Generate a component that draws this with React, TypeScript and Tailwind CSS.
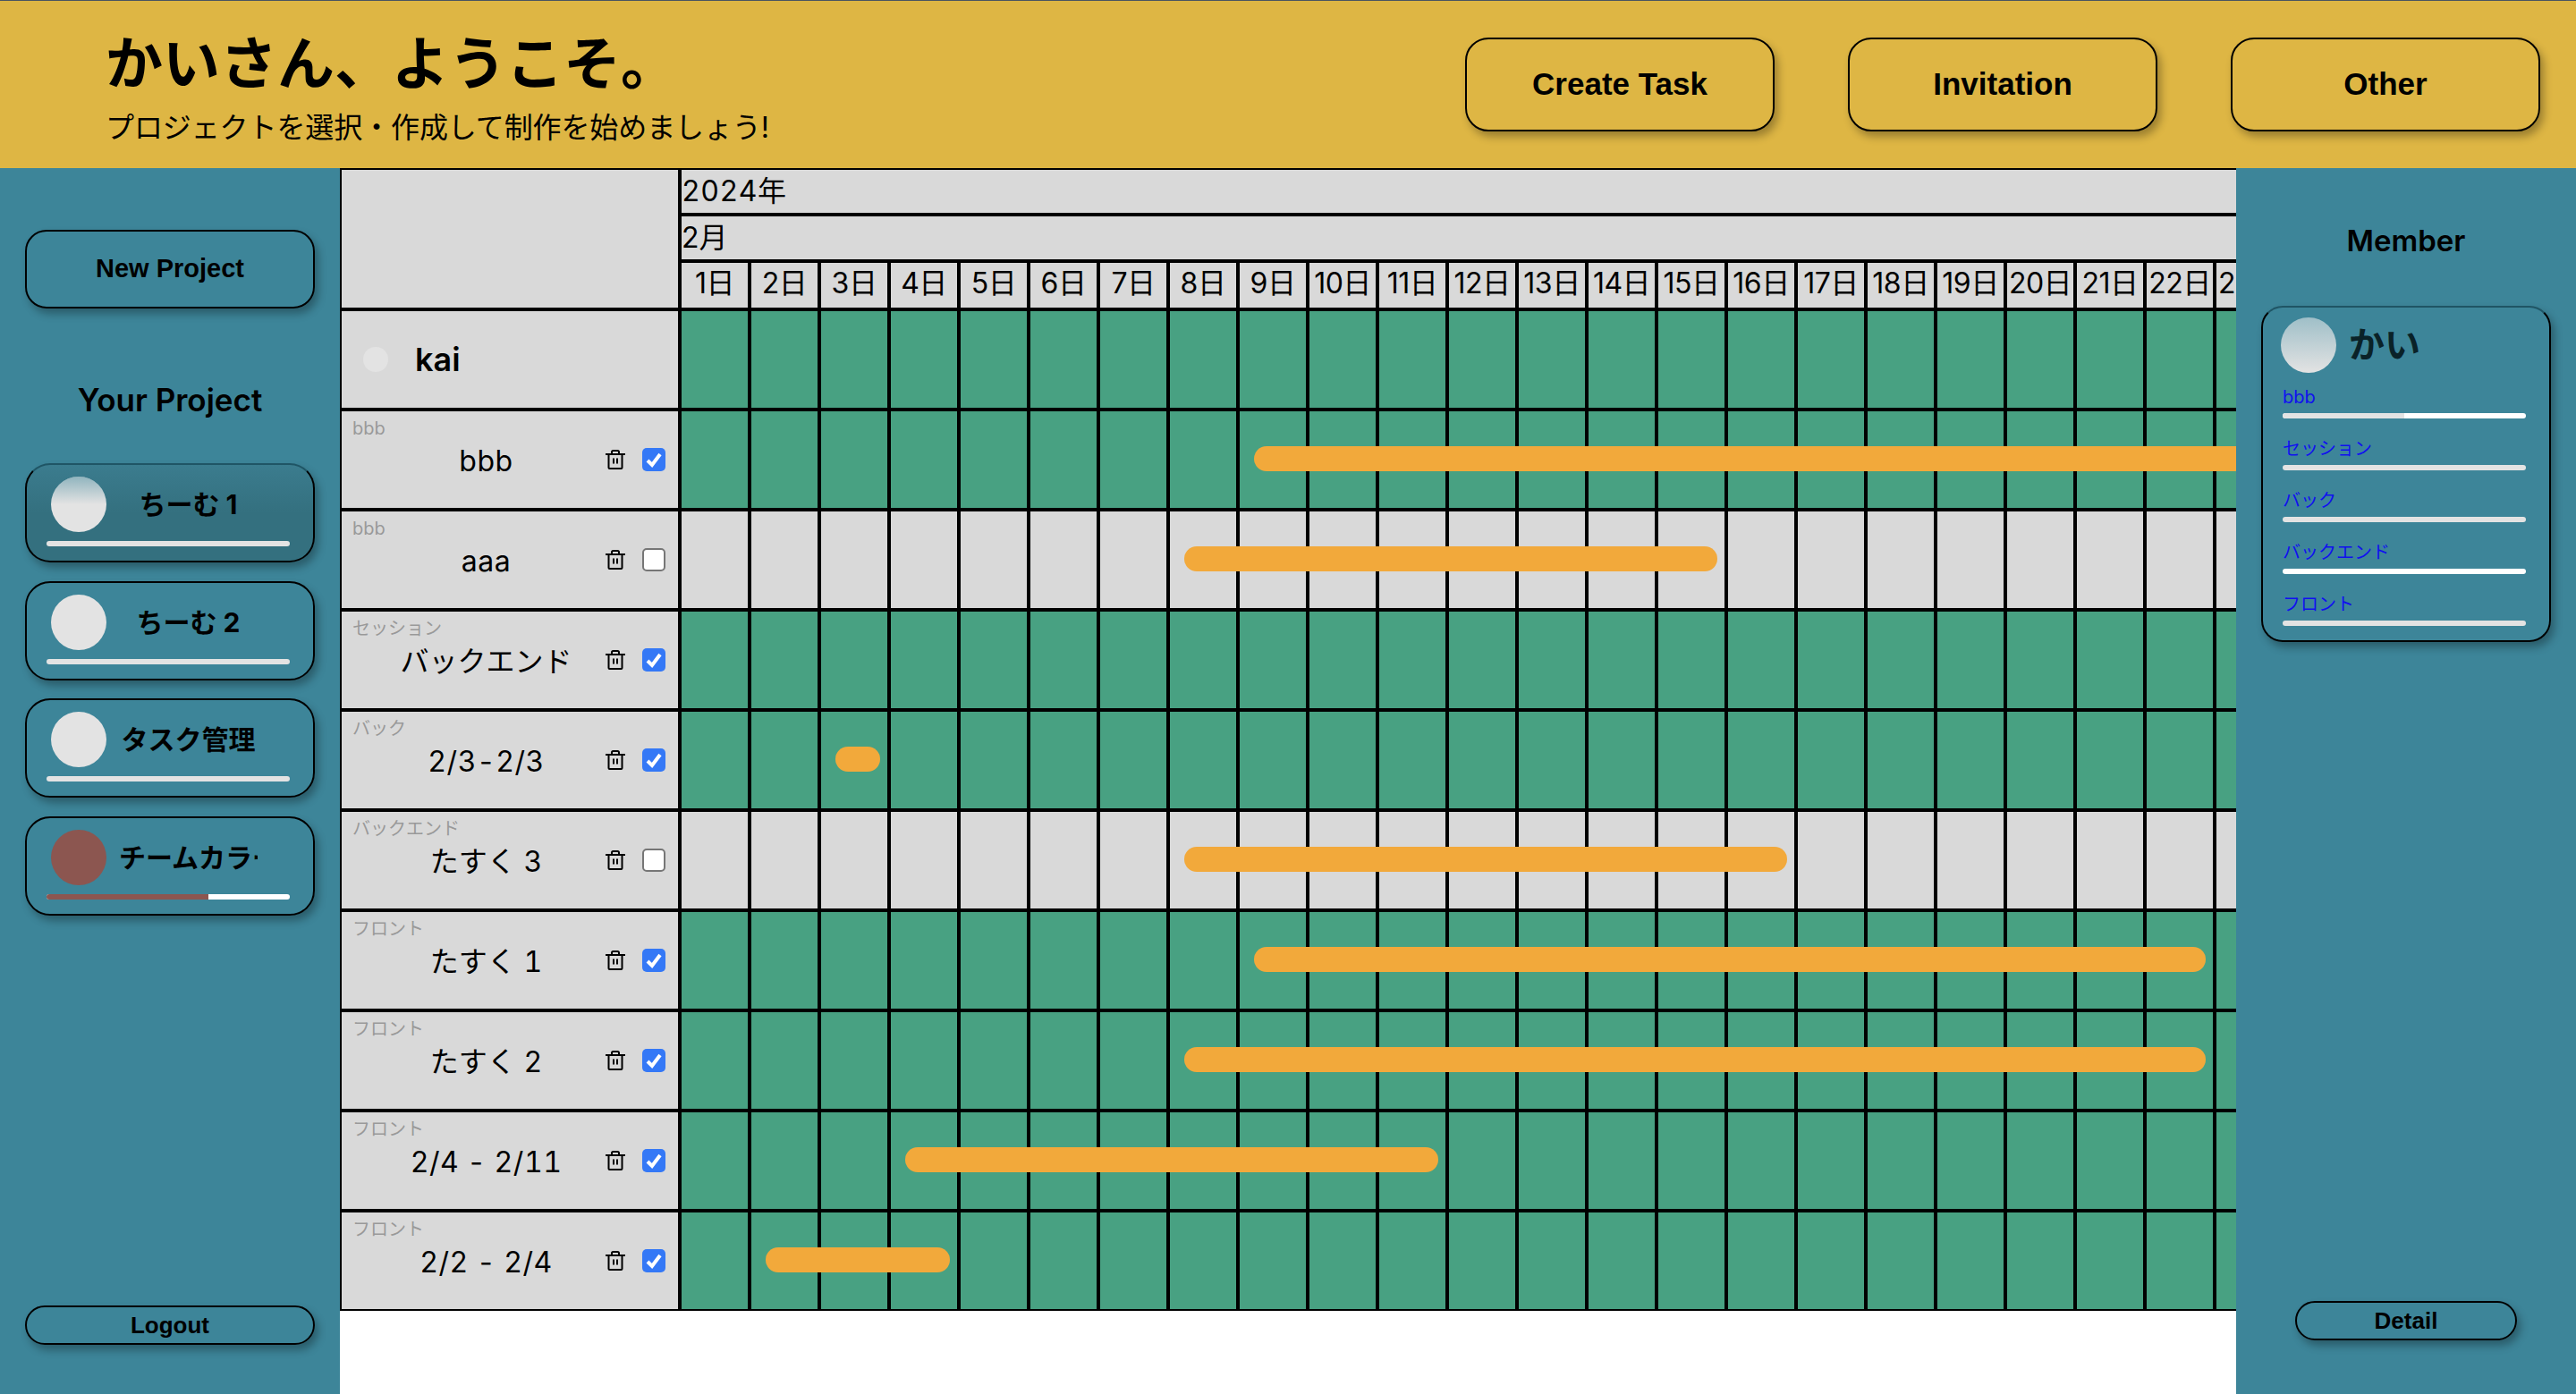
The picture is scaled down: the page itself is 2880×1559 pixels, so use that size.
import { Fragment } from 'react';

const JP = "font-['Inter','Noto_Sans_CJK_JP',sans-serif]";

interface Task {
  tag: string;
  name: string;
  done: boolean;
  // bar position in days, from the 1st
  from: number;
  to: number;
}

const days = Array.from({ length: 23 }, (_, i) => i + 1);

const tasks: Task[] = [
  { tag: 'bbb', name: 'bbb', done: true, from: 9, to: 30 },
  { tag: 'bbb', name: 'aaa', done: false, from: 8, to: 15 },
  { tag: 'セッション', name: 'バックエンド', done: true, from: 0, to: 0 },
  { tag: 'バック', name: '2/3-2/3', done: true, from: 3, to: 3 },
  { tag: 'バックエンド', name: 'たすく 3', done: false, from: 8, to: 16 },
  { tag: 'フロント', name: 'たすく 1', done: true, from: 9, to: 22 },
  { tag: 'フロント', name: 'たすく 2', done: true, from: 8, to: 22 },
  { tag: 'フロント', name: '2/4 - 2/11', done: true, from: 4, to: 11 },
  { tag: 'フロント', name: '2/2 - 2/4', done: true, from: 2, to: 4 },
];

const projects = [
  { name: 'ちーむ 1', color: '#e3e3e3', percent: 100, active: true },
  { name: 'ちーむ 2', color: '#e3e3e3', percent: 100, active: false },
  { name: 'タスク管理', color: '#e3e3e3', percent: 100, active: false },
  { name: 'チームカラー', color: '#8c5650', percent: 66.7, active: false },
];

const memberTasks = [
  { name: 'bbb', percent: 50 },
  { name: 'セッション', percent: 100 },
  { name: 'バック', percent: 100 },
  { name: 'バックエンド', percent: 0 },
  { name: 'フロント', percent: 100 },
];

function TrashIcon() {
  return (
    <svg viewBox="0 0 22 22" className="h-[22px] w-[22px] shrink-0" fill="none" stroke="#000" strokeWidth="2">
      <path d="M0 5h22" />
      <path d="M7 5V2.500A1.500 1.500 0 0 1 8.500 1h5A1.500 1.500 0 0 1 15 2.500V5" />
      <path d="M3.500 5v15a1 1 0 0 0 1 1h13a1 1 0 0 0 1-1V5" />
      <path d="M9 9.500v6M13 9.500v6" />
    </svg>
  );
}

function Check({ checked }: { checked: boolean }) {
  if (!checked) {
    return <span className="block h-[26px] w-[26px] shrink-0 rounded-[5px] border-2 border-[#767676] bg-white" />;
  }
  return (
    <span className="flex h-[26px] w-[26px] shrink-0 items-center justify-center rounded-[5px] bg-[#3478f6]">
      <svg viewBox="0 0 26 26" className="h-[26px] w-[26px]" fill="none" stroke="#fff" strokeWidth="4">
        <path d="M6 14l5 5 9-12" />
      </svg>
    </span>
  );
}

function Bar({ percent, color }: { percent: number; color: string }) {
  return (
    <div className="h-[6px] w-[272px] overflow-hidden rounded-full bg-white">
      <div className="h-full" style={{ width: `${percent}%`, backgroundColor: color }} />
    </div>
  );
}

function DayCells({ done }: { done: boolean }) {
  return (
    <>
      {days.map((d) => (
        <div
          key={d}
          className={`h-full w-[78px] shrink-0 border-2 border-black ${done ? 'bg-[#48a182]' : 'bg-[#d9d9d9]'}`}
        />
      ))}
    </>
  );
}

function TaskRow({ task }: { task: Task }) {
  const left = (task.from - 1) * 78 + 18;
  const width = (task.to - task.from + 1) * 78 - 28;
  // latin names run wider in the reference than the japanese ones
  const latin = /^[\x20-\x7e]+$/.test(task.name);
  return (
    <div className="flex h-[112px]">
      <div className="relative flex w-[380px] shrink-0 items-center border-2 border-black bg-[#d9d9d9] pr-[14px] pl-[28px]">
        <span className="absolute top-[5px] left-[12px] text-[20px] leading-[28px] text-[#999]">{task.tag}</span>
        <span
          className={`mt-[3px] flex-1 text-center text-[32px] leading-none whitespace-nowrap tabular-nums ${
            latin ? 'tracking-[0.5px]' : ''
          }`}
        >
          {task.name}
        </span>
        <TrashIcon />
        <span className="ml-[19px]">
          <Check checked={task.done} />
        </span>
      </div>
      <div className="relative flex h-full">
        <DayCells done={task.done} />
        {task.from > 0 && (
          <div
            className="absolute top-[41px] h-[28px] rounded-full bg-[#f2a93b]"
            style={{ left, width }}
          />
        )}
      </div>
    </div>
  );
}

function Gantt() {
  return (
    <main className={`h-full w-[2120px] shrink-0 overflow-hidden bg-white text-black ${JP}`}>
      <div className="flex h-[158px]">
        <div className="w-[380px] shrink-0 border-2 border-black bg-[#d9d9d9]" />
        <div className="flex w-[1740px] shrink-0 flex-col bg-[#d9d9d9] text-[32px] leading-none">
          <div className="flex h-[52px] items-center border-2 border-r-0 border-black tracking-[0.5px] tabular-nums">2024年</div>
          <div className="flex h-[52px] items-center border-2 border-r-0 border-black">2月</div>
          <div className="flex h-[54px]">
            {days.map((d) => (
              <div
                key={d}
                className="flex w-[78px] shrink-0 items-center justify-center border-2 border-black pb-[4px] tracking-[-0.5px] whitespace-nowrap"
              >
                {d}日
              </div>
            ))}
          </div>
        </div>
      </div>
      <div className="flex h-[112px]">
        <div className="flex w-[380px] shrink-0 items-center gap-[30px] border-2 border-black bg-[#d9d9d9] pl-[24px]">
          <span className="h-[28px] w-[28px] rounded-full bg-[#e3e3e3]" />
          <span className="text-[36px] leading-none font-semibold">kai</span>
        </div>
        <div className="flex h-full">
          <DayCells done />
        </div>
      </div>
      {tasks.map((t) => (
        <Fragment key={t.name}>
          <TaskRow task={t} />
        </Fragment>
      ))}
    </main>
  );
}

export default function App() {
  const arial = "font-['Liberation_Sans',sans-serif]";
  const raised = 'shadow-[4px_6px_10px_rgba(0,0,0,0.3)]';
  return (
    <div className={`flex h-screen flex-col overflow-hidden bg-white text-black ${JP}`}>
      <header className="flex h-[188px] shrink-0 items-center justify-between border-t border-[#4a5560] bg-[#deb644] pr-[40px] pl-[118px]">
        <div className="mt-[2px]">
          <h1 className="text-[64px] leading-[84px] font-bold">かいさん、ようこそ。</h1>
          <p className="mt-[10px] text-[32px] leading-[40px] tracking-[-0.1px]">プロジェクトを選択・作成して制作を始めましょう!</p>
        </div>
        <div className="flex gap-[82px]">
          {['Create Task', 'Invitation', 'Other'].map((b) => (
            <button
              key={b}
              className={`h-[105px] w-[346px] rounded-[26px] border-2 border-black text-[35px] font-bold ${arial} ${raised}`}
            >
              {b}
            </button>
          ))}
        </div>
      </header>

      <div className="flex min-h-0 flex-1">
        <aside className="flex w-[380px] shrink-0 flex-col items-center bg-[#3d8599] pt-[69px] pb-[55px]">
          <button className={`h-[88px] w-[324px] rounded-[24px] border-2 border-black text-[29px] font-bold ${arial} ${raised}`}>
            New Project
          </button>
          <h2 className="mt-[80px] text-[35px] leading-[44px] font-semibold">Your Project</h2>
          <div className="mt-[49px] flex flex-col gap-[20.500px]">
            {projects.map((p) => (
              <div
                key={p.name}
                className={`flex h-[111px] w-[324px] flex-col rounded-[28px] border-2 border-black px-[22px] pt-[13px] ${raised} ${
                  p.active ? 'border-t-[#1f5565] bg-linear-to-b from-[#3b7c8e] to-[#34707f] to-50%' : ''
                }`}
              >
                <div className="flex items-center">
                  <span className="relative ml-[5px] h-[62px] w-[62px] shrink-0 overflow-hidden rounded-full" style={{ backgroundColor: p.color }}>
                    {p.active && <span className="absolute inset-0 bg-linear-to-b from-[#3d8599]/50 to-transparent to-50%" />}
                  </span>
                  <span className="ml-[14px] w-[155px] overflow-hidden text-center text-[30px] leading-[40px] font-bold whitespace-nowrap">
                    {p.name}
                  </span>
                </div>
                <div className="mt-[10px]">
                  <Bar percent={p.percent} color={p.color} />
                </div>
              </div>
            ))}
          </div>
          <button className={`mt-auto h-[44px] w-[324px] rounded-full border-2 border-black text-[26px] leading-none font-bold ${arial} ${raised}`}>
            Logout
          </button>
        </aside>

        <Gantt />

        <aside className="flex w-[380px] shrink-0 flex-col items-center bg-[#3d8599] pt-[59px] pb-[60px]">
          <h2 className="text-[33px] leading-[44px] font-semibold">Member</h2>
          <div className={`mt-[51px] h-[376px] w-[324px] rounded-[24px] border-2 border-black border-t-[#1f5565] pt-[11px] pr-[22px] pl-[20px] ${raised}`}>
            <div className="flex items-center gap-[14px]">
              <span className="h-[62px] w-[62px] rounded-full bg-linear-to-b from-[#9fbfc8] to-[#e3e3e3]" />
              <span className="text-[40px] leading-none font-bold text-[#0a2228]">かい</span>
            </div>
            <div className="mt-[5px] ml-[2px] flex flex-col">
              {memberTasks.map((m) => (
                <div key={m.name} className="h-[58px]">
                  <div className="h-[40px] pt-[8px] text-[20px] leading-[28px] text-[#1010f0]">{m.name}</div>
                  <Bar percent={m.percent} color="#e3e3e3" />
                </div>
              ))}
            </div>
          </div>
          <button className={`mt-auto h-[44px] w-[248px] rounded-full border-2 border-black text-[26px] leading-none font-bold ${arial} ${raised}`}>
            Detail
          </button>
        </aside>
      </div>
    </div>
  );
}
